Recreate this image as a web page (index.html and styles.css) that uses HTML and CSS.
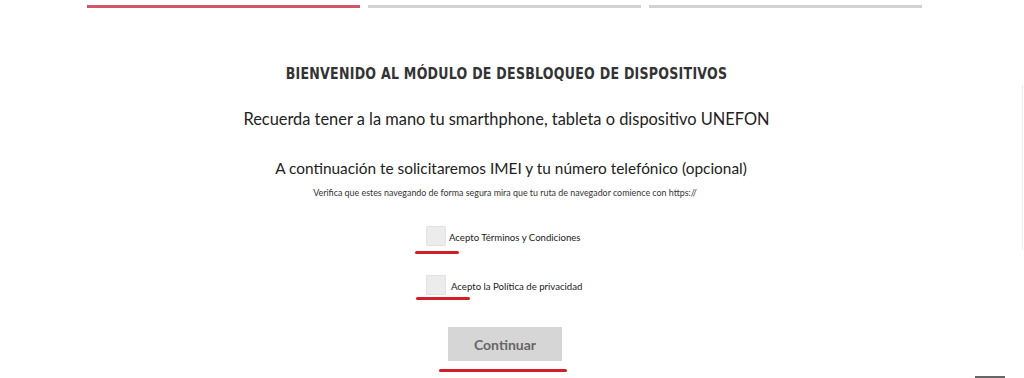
FILE: index.html
```html
<!DOCTYPE html>
<html lang="es">
<head>
<meta charset="utf-8">
<title>Desbloqueo de dispositivos</title>
<link rel="stylesheet" href="styles.css">
</head>
<body>
<div class="page">
  <div class="steps">
    <div class="step active"></div>
    <div class="step"></div>
    <div class="step"></div>
  </div>
  <main class="content">
    <h1 class="title">BIENVENIDO AL MÓDULO DE DESBLOQUEO DE DISPOSITIVOS</h1>
    <p class="lead">Recuerda tener a la mano tu smarthphone, tableta o dispositivo UNEFON</p>
    <p class="sub">A continuación te solicitaremos IMEI y tu número telefónico (opcional)</p>
    <p class="note">Verifica que estes navegando de forma segura mira que tu ruta de navegador comience con https://</p>
    <label class="check check-1">
      <span class="box"></span>
      <span class="label">Acepto Términos y Condiciones</span>
      <span class="mark mark-1"></span>
    </label>
    <label class="check check-2">
      <span class="box"></span>
      <span class="label label-2">Acepto la Política de privacidad</span>
      <span class="mark mark-2"></span>
    </label>
    <div class="btn-wrap">
      <button class="btn">Continuar</button>
      <span class="mark mark-3"></span>
    </div>
  </main>
  <div class="scroll"></div>
  <div class="corner"></div>
</div>
</body>
</html>
```
FILE: styles.css
```css
html, body {
  margin: 0;
  padding: 0;
  background: #fff;
}
body {
  width: 1024px;
  height: 378px;
  overflow: hidden;
  font-family: "Lato", "Noto Sans", sans-serif;
  color: #222;
}
.page {
  position: relative;
  height: 378px;
}
.steps {
  display: flex;
  gap: 8px;
  padding: 5px 0 0 87px;
}
.step {
  width: 273px;
  height: 3px;
  background: #d2d2d2;
}
.step.active {
  background: #d4566a;
}
.content {
  display: flex;
  flex-direction: column;
  align-items: center;
  padding-left: 4px;
}
.title {
  margin: 56px 15px 0 0;
  font-family: "DejaVu Sans Condensed", "DejaVu Sans", sans-serif;
  font-weight: 700;
  font-size: 14px;
  letter-spacing: 0.25px;
  line-height: 18px;
  color: #333;
  transform: scaleY(1.18);
}
.lead {
  margin: 26px 15px 0 0;
  font-size: 16.4px;
  line-height: 22px;
  color: #222;
}
.sub {
  margin: 27px 6px 0 0;
  font-size: 15.4px;
  line-height: 22px;
  color: #222;
}
.note {
  margin: 8px 18px 0 0;
  font-size: 8.9px;
  line-height: 12px;
  color: #333;
}
.check {
  position: relative;
  display: flex;
  align-items: center;
  width: 160px;
  margin-right: 16px;
  white-space: nowrap;
}
.check-1 {
  margin-top: 27px;
}
.check-2 {
  margin-top: 29px;
}
.box {
  width: 18px;
  height: 18px;
  background: #ececec;
  border: 1px solid #e2e2e2;
  border-radius: 1px;
  flex: none;
  margin-right: 3px;
}
.label {
  font-size: 9.6px;
  line-height: 12px;
  color: #222;
  padding-top: 3px;
}
.label-2 {
  padding-left: 2px;
}
.mark {
  position: absolute;
  height: 3px;
  background: #d11f2a;
  border-radius: 2px;
}
.mark-1 {
  left: -11px;
  top: 25px;
  width: 44px;
}
.mark-2 {
  left: -10px;
  top: 22px;
  width: 54px;
}
.btn-wrap {
  position: relative;
  margin-top: 32px;
  margin-right: 18px;
}
.btn {
  display: block;
  width: 114px;
  height: 34px;
  border: 0;
  background: #d6d6d6;
  color: #666;
  font-family: "Lato", "Noto Sans", sans-serif;
  font-size: 14px;
  font-weight: 700;
  padding: 0;
}
.mark-3 {
  left: -9px;
  top: 42px;
  width: 128px;
}
.scroll {
  position: absolute;
  right: 1px;
  top: 85px;
  width: 1px;
  height: 165px;
  background: #ededed;
}
.corner {
  position: absolute;
  left: 975px;
  bottom: 0;
  width: 30px;
  height: 2px;
  background: #666;
}
```
